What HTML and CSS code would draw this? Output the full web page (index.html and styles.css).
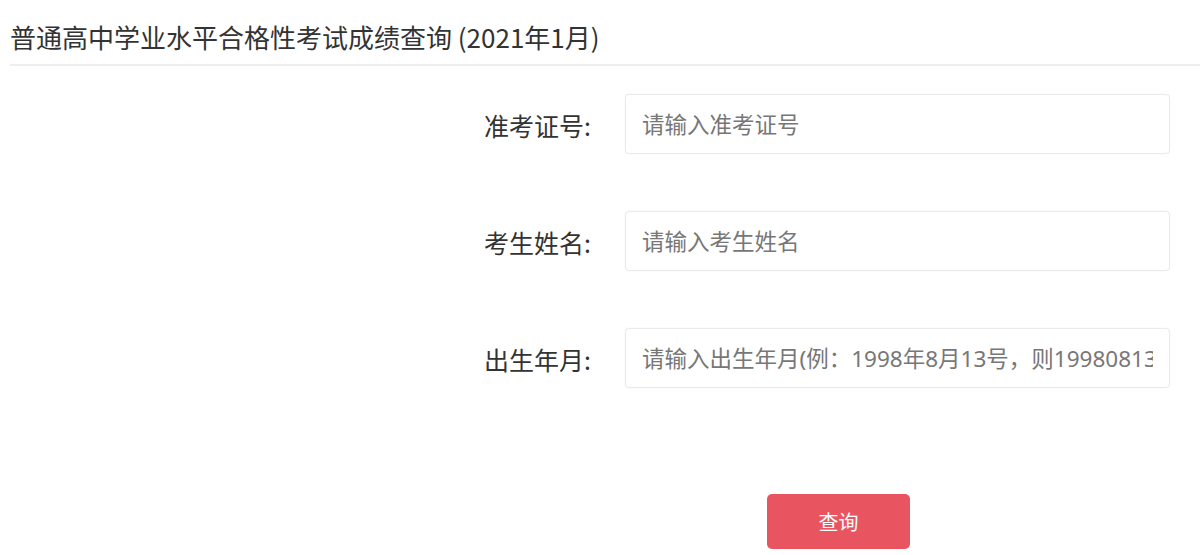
FILE: index.html
```html
<!DOCTYPE html>
<html lang="zh-CN">
<head>
  <meta charset="UTF-8" />
  <title>成绩查询</title>
  <meta name="viewport" content="width=device-width, initial-scale=1.0"/>
  <link rel="stylesheet" href="styles.css">
</head>
<body>
  <!-- 标题 -->
  <div class="page-title">普通高中学业水平合格性考试成绩查询 (2021年1月)</div>

  <!-- 查询表单 -->
  <form class="query-form" onsubmit="return false;">
    <div class="form-row">
      <label class="form-label" for="ksh">准考证号:</label>
      <input class="form-input" id="ksh" type="text" placeholder="请输入准考证号" />
    </div>
    <div class="form-row">
      <label class="form-label" for="xm">考生姓名:</label>
      <input class="form-input" id="xm" type="text" placeholder="请输入考生姓名" />
    </div>
    <div class="form-row">
      <label class="form-label" for="csny">出生年月:</label>
      <input class="form-input" id="csny" type="text" placeholder="请输入出生年月(例：1998年8月13号，则19980813)" />
    </div>
    <div class="form-actions">
      <button class="query-btn" type="submit">查询</button>
    </div>
  </form>
</body>
</html>
```

FILE: styles.css
```css
/* ====== 通用 ====== */
body{margin:0;padding:0;background:#fff;color:#333;
     font-family:"Microsoft YaHei","Noto Sans CJK SC",sans-serif;}

/* ====== 标题 ====== */
.page-title{margin-left:10px;padding:20px 0 10px 0;font-size:26px;line-height:34px;color:#333;
            border-bottom:2px solid #eee;}

/* ====== 表单 ====== */
.query-form{padding-top:28px;}
.form-row{display:flex;align-items:center;height:60px;margin-bottom:57px;}
.form-label{width:591px;text-align:right;font-size:25px;color:#333;margin-top:2px;}
.form-input{margin-left:34px;width:545px;height:60px;box-sizing:border-box;padding:0 16px;
            border:1px solid #eaeaea;border-radius:4px;box-shadow:0 0 2px rgba(0,0,0,.06);
            font-family:"Noto Sans","Noto Sans CJK SC",sans-serif;font-size:22.5px;color:#555;outline:none;}
.form-input::placeholder{color:#777;}

.form-actions{padding-top:49px;padding-left:767px;}
.query-btn{width:143px;height:55px;border:none;border-radius:5px;background:#e8545f;color:#fff;
           font-family:inherit;font-size:20px;cursor:pointer;}
.query-btn:hover{opacity:.9;}
```
